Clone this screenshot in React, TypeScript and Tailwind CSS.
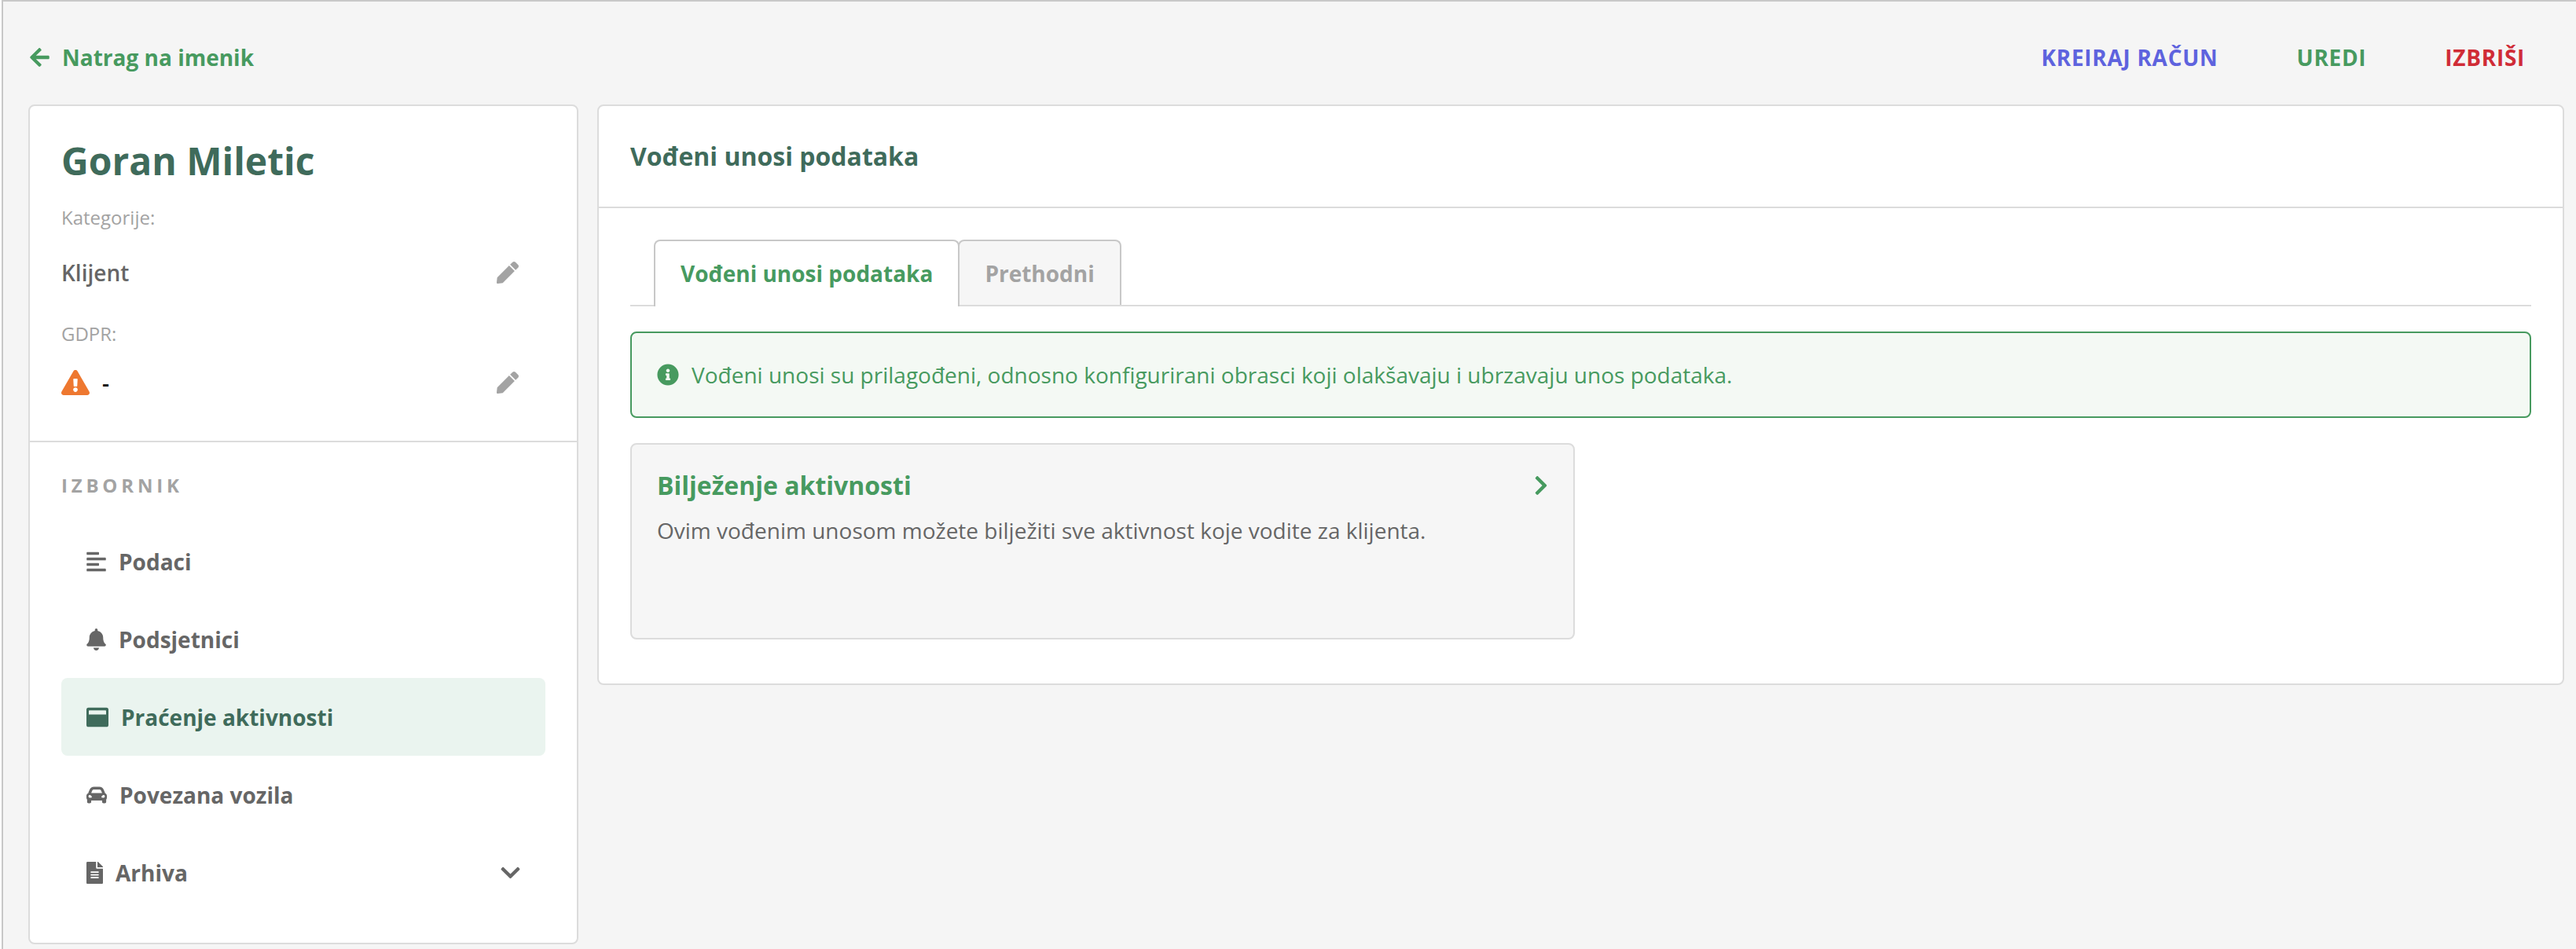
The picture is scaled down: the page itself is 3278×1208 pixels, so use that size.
import { useState } from 'react';
import type { ReactNode } from 'react';
import {
  FaAlignLeft,
  FaArrowLeft,
  FaBell,
  FaCarAlt,
  FaChevronDown,
  FaChevronRight,
  FaExclamationTriangle,
  FaFileAlt,
  FaInfoCircle,
  FaPen,
} from 'react-icons/fa';

const WindowIcon = () => (
  <svg viewBox="0 0 28 28" className="h-7 w-7" fill="currentColor" aria-hidden="true">
    <path
      fillRule="evenodd"
      d="M2.6 1.750h22.800A2.600 2.600 0 0 1 28 4.350v19.300a2.600 2.600 0 0 1-2.600 2.600H2.600A2.600 2.600 0 0 1 0 23.650V4.350A2.600 2.600 0 0 1 2.600 1.750zM3.700 5.250a.7.7 0 0 0-.7.7v4.500h22v-4.500a.7.7 0 0 0-.7-.7z"
    />
  </svg>
);

type MenuItem = {
  label: string;
  icon: ReactNode;
  active?: boolean;
  expandable?: boolean;
};

const menuItems: MenuItem[] = [
  { label: 'Podaci', icon: <FaAlignLeft className="h-7 w-[25px]" /> },
  { label: 'Podsjetnici', icon: <FaBell className="h-7 w-[25px]" /> },
  { label: 'Praćenje aktivnosti', icon: <WindowIcon />, active: true },
  { label: 'Povezana vozila', icon: <FaCarAlt className="h-7 w-[26px]" /> },
  { label: 'Arhiva', icon: <FaFileAlt className="h-7 w-[21px]" />, expandable: true },
];

const tabs = ['Vođeni unosi podataka', 'Prethodni'];

const TopBar = () => (
  <header className="flex h-[131px] items-center justify-between pt-[10px] pr-[50px] pl-[2px]">
    <a href="#imenik" className="flex items-center gap-4 font-bold text-[#479a5f]">
      <FaArrowLeft className="h-7 w-[25px]" />
      Natrag na imenik
    </a>
    <div className="flex gap-[100px] font-bold">
      <button type="button" className="tracking-wide uppercase text-[#5e63de]">Kreiraj račun</button>
      <button type="button" className="tracking-wide uppercase text-[#479a5f]">Uredi</button>
      <button type="button" className="tracking-wide uppercase text-[#d02c36]">Izbriši</button>
    </div>
  </header>
);

const EditButton = ({ label }: { label: string }) => (
  <button type="button" aria-label={label} className="mr-[34px] text-[#a3a3a3]">
    <FaPen className="h-7 w-7" />
  </button>
);

const Sidebar = () => (
  <aside className="w-[700px] shrink-0 rounded-lg border-2 border-[#dcdcdc] bg-white">
    <section className="border-b-2 border-[#dcdcdc] px-10 pt-10 pb-[54px]">
      <h1 className="text-5xl leading-[60px] font-bold text-[#3f6b5b]">Goran Miletic</h1>
      <p className="mt-6 text-2xl leading-9 text-[#a3a3a3]">Kategorije:</p>
      <div className="mt-8 flex h-10 items-center justify-between">
        <span className="font-semibold">Klijent</span>
        <EditButton label="Uredi kategorije" />
      </div>
      <p className="mt-10 text-2xl leading-9 text-[#a3a3a3]">GDPR:</p>
      <div className="mt-6 flex h-10 items-center justify-between">
        <span className="flex items-center gap-4 font-semibold text-black">
          <FaExclamationTriangle className="h-8 w-9 text-[#ee7830]" />
          -
        </span>
        <EditButton label="Uredi GDPR" />
      </div>
    </section>

    <nav className="px-10 pt-9 pb-10">
      <h2 className="mb-7 text-2xl leading-[38px] font-bold tracking-[0.2em] text-[#a3a3a3] uppercase">Izbornik</h2>
      {menuItems.map((item) => (
        <a
          key={item.label}
          href="#"
          className={`flex h-[99px] items-center gap-4 rounded-lg px-8 font-bold ${
            item.active ? 'bg-[#eaf4ef] text-[#3f6b5b]' : ''
          }`}
        >
          {item.icon}
          {item.label}
          {item.expandable && <FaChevronDown className="ml-auto h-7 w-[25px]" />}
        </a>
      ))}
    </nav>
  </aside>
);

const Tabs = () => {
  const [current, setCurrent] = useState(0);

  return (
    <div role="tablist" className="flex h-[85px] items-start border-b-2 border-[#dcdcdc] pl-[30px]">
      {tabs.map((tab, index) => (
        <button
          key={tab}
          type="button"
          role="tab"
          aria-selected={index === current}
          onClick={() => setCurrent(index)}
          className={`-mr-[2px] rounded-t-lg border-2 border-b-0 border-[#c8c8c8] px-8 font-bold ${
            index === current ? 'z-10 h-[85px] bg-white pb-[2px] text-[#479a5f]' : 'h-[83px] bg-[#f6f6f6] text-[#a3a3a3]'
          }`}
        >
          {tab}
        </button>
      ))}
    </div>
  );
};

const GuidedEntries = () => (
  <main className="flex-1 rounded-lg border-2 border-[#dcdcdc] bg-white">
    <h2 className="border-b-2 border-[#dcdcdc] px-10 text-[32px] leading-[128px] font-bold text-[#3f6b5b]">
      Vođeni unosi podataka
    </h2>
    <div className="px-10 pt-10 pb-14">
      <Tabs />
      <div className="mt-8 flex h-[110px] items-center gap-4 rounded-lg border-2 border-[#479a5f] bg-[#f4f9f4] px-8 text-[#479a5f]">
        <FaInfoCircle className="h-7 w-7" />
        Vođeni unosi su prilagođeni, odnosno konfigurirani obrasci koji olakšavaju i ubrzavaju unos podataka.
      </div>
      <div className="mt-8 grid grid-cols-2 gap-4">
        <a href="#" className="block min-h-[250px] rounded-lg border-2 border-[#dcdcdc] bg-[#f6f6f6] px-8 py-7">
          <div className="flex items-center justify-between text-[#479a5f]">
            <h3 className="text-[32px] leading-[48px] font-bold">Bilježenje aktivnosti</h3>
            <FaChevronRight className="h-7 w-[18px]" />
          </div>
          <p className="mt-3 leading-[42px]">Ovim vođenim unosom možete bilježiti sve aktivnost koje vodite za klijenta.</p>
        </a>
      </div>
    </div>
  </main>
);

const App = () => (
  <div className="min-h-screen bg-white pl-[2px] font-['Open_Sans',sans-serif] text-[28px] leading-10 text-[#666666]">
    <div className="min-h-screen border-t-2 border-l-2 border-[#c8c8c8] bg-[#f5f5f5] pr-[15px] pl-8">
      <TopBar />
      <div className="flex items-start gap-6">
        <Sidebar />
        <GuidedEntries />
      </div>
    </div>
  </div>
);

export default App;
